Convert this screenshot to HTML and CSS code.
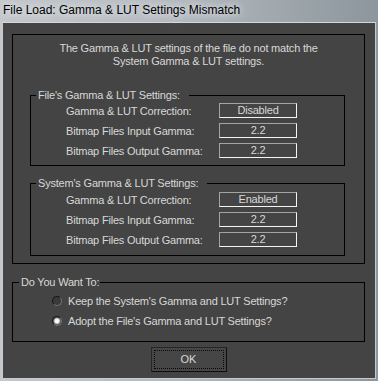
FILE: index.html
```html
<!DOCTYPE html>
<html lang="en">
  <head>
    <meta charset="UTF-8" />
    <title>File Load: Gamma &amp; LUT Settings Mismatch</title>
    <link rel="stylesheet" href="styles.css">
  </head>
  <body>
    <div class="titlebar">File Load: Gamma &amp; LUT Settings Mismatch</div>
    <div class="dialog">
      <fieldset class="group outer">
        <p class="message">
          The Gamma &amp; LUT settings of the file do not match the<br />
          System Gamma &amp; LUT settings.
        </p>
        <fieldset class="group settings">
          <legend>File's Gamma &amp; LUT Settings:</legend>
          <div class="row">
            <span class="label">Gamma &amp; LUT Correction:</span>
            <span class="value">Disabled</span>
          </div>
          <div class="row">
            <span class="label">Bitmap Files Input Gamma:</span>
            <span class="value">2.2</span>
          </div>
          <div class="row">
            <span class="label">Bitmap Files Output Gamma:</span>
            <span class="value">2.2</span>
          </div>
        </fieldset>
        <fieldset class="group settings system">
          <legend>System's Gamma &amp; LUT Settings:</legend>
          <div class="row">
            <span class="label">Gamma &amp; LUT Correction:</span>
            <span class="value">Enabled</span>
          </div>
          <div class="row">
            <span class="label">Bitmap Files Input Gamma:</span>
            <span class="value">2.2</span>
          </div>
          <div class="row">
            <span class="label">Bitmap Files Output Gamma:</span>
            <span class="value">2.2</span>
          </div>
        </fieldset>
      </fieldset>
      <fieldset class="group choice">
        <legend>Do You Want To:</legend>
        <div class="option"><span class="radio"></span>Keep the System's Gamma and LUT Settings?</div>
        <div class="option"><span class="radio checked"></span>Adopt the File's Gamma and LUT Settings?</div>
      </fieldset>
      <div class="actions">
        <button class="ok"><span class="focus">OK</span></button>
      </div>
    </div>
  </body>
</html>
```

FILE: styles.css
```css
html, body {
  margin: 0;
  width: 378px;
  height: 381px;
  overflow: hidden;
}
body {
  background: linear-gradient(to right, #c3c7cb 0%, #b4bac0 45%, #8d969d 100%);
  font-family: "Liberation Sans", Arial, sans-serif;
  font-size: 11px;
  letter-spacing: -0.2px;
  color: #d8d8d8;
}
.titlebar {
  height: 22px;
  line-height: 20px;
  padding-left: 3px;
  font-size: 12px;
  letter-spacing: 0;
  color: #000;
  text-shadow: 0 0 6px #e4e8ec, 0 0 10px #e4e8ec;
  white-space: nowrap;
}
.dialog {
  box-sizing: border-box;
  height: 357px;
  margin: 0 2px;
  border: 1px solid #c4cad0;
  border-top-color: #d4d8dc;
  background: #444;
}
.group {
  margin: 0;
  padding: 0;
  border: 1px solid #000;
  min-width: 0;
}
.group legend {
  padding: 0 2px;
  line-height: 13px;
}
.outer {
  margin: 11px 10px 0 9px;
  padding-bottom: 7px;
}
.message {
  margin: 0;
  padding-top: 7px;
  line-height: 13px;
  text-align: center;
}
.settings {
  margin: 21px 19px 0 17px;
  padding: 1px 0 7px;
  display: flex;
  flex-direction: column;
  gap: 5px;
}
.settings legend {
  margin-left: 5px;
  padding-right: 9px;
}
.system {
  margin-top: 11px;
  padding: 2px 0 8px;
}
.row {
  display: flex;
  align-items: center;
  height: 15px;
}
.label {
  width: 153px;
  margin-left: 35px;
  white-space: nowrap;
}
.value {
  box-sizing: border-box;
  width: 78px;
  height: 15px;
  line-height: 13px;
  text-align: center;
  border: 1px solid;
  border-color: #a4a4a4 #f4f4f4 #f4f4f4 #a4a4a4;
}
.choice {
  margin: 12px 10px 0 9px;
  padding: 5px 0 13px 39px;
  display: flex;
  flex-direction: column;
  gap: 6px;
}
.choice legend {
  margin-left: -33px;
  padding-right: 1px;
}
.option {
  display: flex;
  align-items: center;
  gap: 6px;
  height: 14px;
  white-space: nowrap;
}
.radio {
  box-sizing: border-box;
  width: 10px;
  height: 10px;
  border-radius: 50%;
  border: 1px solid;
  border-color: #181818 #747474 #747474 #181818;
  background: #3a3a3a;
}
.radio.checked {
  background: radial-gradient(circle, #ffffff 0, #f0f0f0 2px, #9a9a9a 3px, #3a3a3a 4px);
}
.actions {
  display: flex;
  justify-content: center;
  margin-top: 5px;
}
.ok {
  box-sizing: border-box;
  width: 76px;
  height: 25px;
  margin-left: -1px;
  padding: 2px;
  background: #464646;
  border: 1px solid;
  border-color: #262626 #0e0e0e #0e0e0e #262626;
  font: inherit;
  color: #d8d8d8;
  display: flex;
}
.focus {
  flex: 1;
  border: 1px dotted #0a0a0a;
  line-height: 17px;
}
```
